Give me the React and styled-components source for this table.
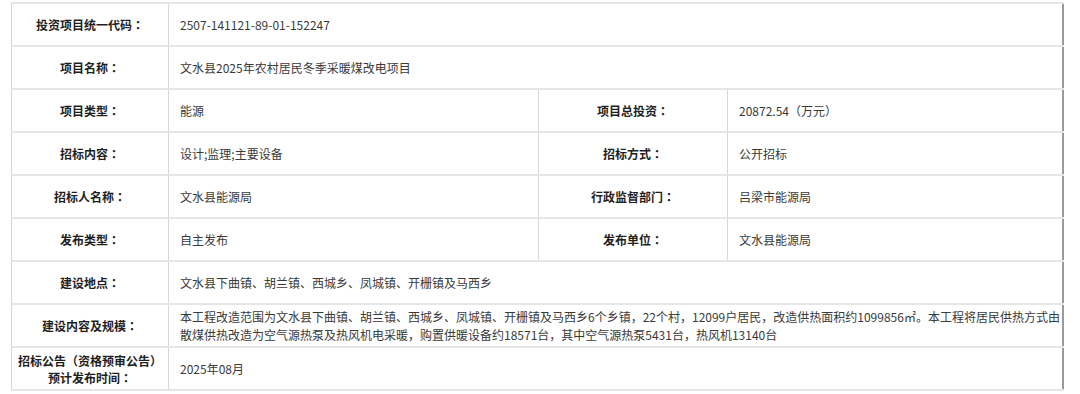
import React from 'react';
import styled, { createGlobalStyle } from 'styled-components';

const GlobalStyle = createGlobalStyle`
  body {
    margin: 0;
    background: #fff;
    font-family: "Microsoft YaHei", "Noto Sans CJK SC", "Noto Sans", sans-serif;
  }
`;

const Page = styled.div`
  padding: 2px 0 0 11px;
  width: 1080px;
  height: 394px;
  box-sizing: border-box;
  overflow: hidden;
`;

const Table = styled.table`
  width: 1053px;
  border-collapse: collapse;
  table-layout: fixed;
  border-left: 1px solid #d4d4d4;
  border-right: 2px solid #9a9a9a;
  font-size: 12px;
`;

const Row = styled.tr`
  height: 43px;
`;

const Label = styled.td`
  border-top: 2px solid #e6e6e6;
  border-bottom: 2px solid #e6e6e6;
  border-right: 1px solid #d8d8d8;
  text-align: center;
  font-weight: bold;
  color: #1f1f1f;
  padding: 0 2px;
  line-height: 17px;
`;

// full-width colon drawn centred in its box, as in the reference
const Colon = styled.span`
  font-family: "Noto Sans CJK TC", sans-serif;
`;

const Value = styled.td`
  border-top: 2px solid #e6e6e6;
  border-bottom: 2px solid #e6e6e6;
  border-right: 1px solid #d8d8d8;
  text-align: left;
  color: #3a3a3a;
  padding: 0 1px 0 11px;
  line-height: 18px;
`;

const rows = [
  { label: '投资项目统一代码', value: '2507-141121-89-01-152247' },
  { label: '项目名称', value: '文水县2025年农村居民冬季采暖煤改电项目' },
  { pair: [['项目类型', '能源'], ['项目总投资', '20872.54（万元）']] },
  { pair: [['招标内容', '设计;监理;主要设备'], ['招标方式', '公开招标']] },
  { pair: [['招标人名称', '文水县能源局'], ['行政监督部门', '吕梁市能源局']] },
  { pair: [['发布类型', '自主发布'], ['发布单位', '文水县能源局']] },
  { label: '建设地点', value: '文水县下曲镇、胡兰镇、西城乡、凤城镇、开栅镇及马西乡' },
  {
    label: '建设内容及规模',
    value:
      '本工程改造范围为文水县下曲镇、胡兰镇、西城乡、凤城镇、开栅镇及马西乡6个乡镇，22个村，12099户居民，改造供热面积约1099856㎡。本工程将居民供热方式由散煤供热改造为空气源热泵及热风机电采暖，购置供暖设备约18571台，其中空气源热泵5431台，热风机13140台',
  },
];

const LabelCell = ({ children }) => (
  <Label>
    {children}
    <Colon>：</Colon>
  </Label>
);

export default function App() {
  return (
    <Page>
      <GlobalStyle />
      <Table>
        <colgroup>
          <col style={{ width: 157 }} />
          <col style={{ width: 370 }} />
          <col style={{ width: 189 }} />
          <col />
        </colgroup>
        <tbody>
          {rows.map((r, i) =>
            r.pair ? (
              <Row key={i}>
                <LabelCell>{r.pair[0][0]}</LabelCell>
                <Value>{r.pair[0][1]}</Value>
                <LabelCell>{r.pair[1][0]}</LabelCell>
                <Value>{r.pair[1][1]}</Value>
              </Row>
            ) : (
              <Row key={i}>
                <LabelCell>{r.label}</LabelCell>
                <Value colSpan={3}>{r.value}</Value>
              </Row>
            )
          )}
          <Row>
            <Label>
              招标公告<Colon>（</Colon>资格预审公告<Colon>）</Colon>
              <br />
              预计发布时间<Colon>：</Colon>
            </Label>
            <Value colSpan={3}>2025年08月</Value>
          </Row>
        </tbody>
      </Table>
    </Page>
  );
}
